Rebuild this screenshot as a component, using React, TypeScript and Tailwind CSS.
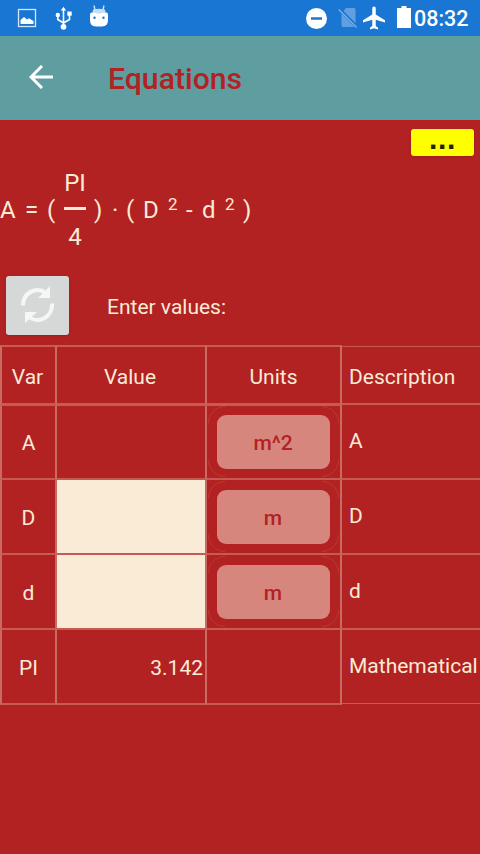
import React from "react";

const line = "border-x-[#cb6a63] border-y-[#c65a54]";

function Term({ w, children }: { w: string; children: React.ReactNode }) {
  return <span className={`${w} shrink-0 whitespace-nowrap pt-[2px]`}>{children}</span>;
}

function StatusBar() {
  return (
    <div className="flex h-9 items-center bg-[#1976d2] text-white">
      <svg className="ml-[17px] h-5 w-5" viewBox="0 0 20 20">
        <rect x="1.5" y="1.5" width="17" height="17" fill="none" stroke="#d5e6f8" strokeWidth="1.3" />
        <path d="M3.500 16v-4l3.500-3 3 2.500 2-1.300 2 1.300 2.500 1.500v3z" fill="white" />
      </svg>
      <svg className="ml-[18px] h-6 w-[18px]" viewBox="0 0 18 24" fill="none" stroke="white" strokeWidth="1.600">
        <path d="M8.500 3v18M2.800 9v4.500L8.500 17l6-3.500V8" />
        <path d="M8.500 .8 11.200 4.500H5.800z" fill="white" stroke="none" />
        <circle cx="2.800" cy="9" r="2.200" fill="white" stroke="none" />
        <rect x="12.300" y="5.500" width="4.400" height="4.200" fill="white" stroke="none" />
        <circle cx="8.500" cy="20.800" r="2.900" fill="white" stroke="none" />
      </svg>
      <svg className="-mt-[4px] ml-[17px] h-[22px] w-[18px]" viewBox="0 0 18 22">
        <path d="M4 .5l1 4.500M14 .5l-1 4.500" stroke="#d5e6f8" strokeWidth="1.300" />
        <path d="M3 4.500q6-1.500 12 0l.7 4H2.300z" fill="#c6ddf5" />
        <path d="M0 9.500q0-1.500 1.500-2 7.500 1.500 15 0 1.500.5 1.500 2V15q0 6.500-6 6.500H6Q0 21.500 0 15z" fill="white" />
        <circle cx="4.500" cy="12.800" r="1.200" fill="#1976d2" />
        <circle cx="13.500" cy="12.800" r="1.200" fill="#1976d2" />
      </svg>
      <svg className="ml-[198px] h-[21px] w-[21px]" viewBox="0 0 21 21">
        <circle cx="10.500" cy="10.500" r="10.500" fill="white" />
        <path d="M5 10.500h11" stroke="#1976d2" strokeWidth="2.500" />
      </svg>
      <svg className="ml-[11px] h-[22px] w-5" viewBox="0 0 20 22">
        <path d="M8 1h8q1.500 0 1.500 1.500V16L5.500 4zM3.500 6.500 16.500 20H5q-1.500 0-1.500-1.500z" fill="#619fdf" />
        <path d="M.7 2.500l18 18" stroke="#7bb0e5" strokeWidth="1.300" />
      </svg>
      <svg className="ml-[5px] h-6 w-[22px]" viewBox="2 1.500 19 21" preserveAspectRatio="none">
        <path d="M21 16v-2l-8-5V3.500a1.500 1.500 0 0 0-3 0V9l-8 5v2l8-2.500V19l-2 1.500V22l3.500-1 3.500 1v-1.500L13 19v-5.500z" fill="white" />
      </svg>
      <svg className="-mt-[2px] ml-[12px] h-[22px] w-[14px]" viewBox="0 0 14 22">
        <path d="M4.500 0h5v2H14v20H0V2h4.500z" fill="white" />
      </svg>
      <span className="ml-[3px] mt-[2px] text-[21.5px] font-medium leading-none">08:32</span>
    </div>
  );
}

const rows = [
  { name: "A", value: "", unit: "m^2", description: "A", input: false },
  { name: "D", value: "", unit: "m", description: "D", input: true },
  { name: "d", value: "", unit: "m", description: "d", input: true },
  { name: "PI", value: "3.142", unit: "", description: "Mathematical", input: false },
];

export default function App() {
  return (
    <div className="flex h-[854px] w-[480px] flex-col overflow-hidden bg-[#b22222] font-['Roboto',sans-serif] text-[#faebd7]">
      <StatusBar />
      <header className="flex h-[84px] items-center bg-[#5f9ea0]">
        <svg className="-mt-[2px] ml-[29px] h-6 w-6" viewBox="0 0 24 24" fill="none" stroke="white" strokeWidth="3">
          <path d="M24 12H2M13 1 2 12l11 11" />
        </svg>
        <h1 className="ml-[55px] mt-[2px] text-[30.2px] font-medium leading-none text-[#b22222]">Equations</h1>
      </header>

      <div className="flex h-[49px] justify-end pr-[6px] pt-[9px]">
        <button className="flex h-[27px] w-[63px] items-center justify-center rounded-[3px] bg-[#ffff00] shadow-sm">
          <span className="-mt-[9px] font-['Liberation_Sans',sans-serif] text-[30px] font-bold leading-[27px] tracking-[0.7px] text-[#222200]">...</span>
        </button>
      </div>

      <div className="flex h-[80px] items-center text-[24px] leading-none">
        <Term w="w-[25px]">A</Term>
        <Term w="w-[22px]">=</Term>
        <Term w="w-[17px]">(</Term>
        <span className="flex w-[22px] flex-col items-center pt-[2px]">
          <span className="h-[24px] whitespace-nowrap">PI</span>
          <span className="mb-[15px] mt-[12px] h-[3px] w-[22px] bg-[#faebd7]" />
          <span className="h-[24px]">4</span>
        </span>
        <span className="w-[8px]" />
        <Term w="w-[18px]">)</Term>
        <Term w="w-[14px]">·</Term>
        <Term w="w-[17px]">(</Term>
        <Term w="w-[25px]">D</Term>
        <span className="mb-[10px] w-[18px] text-[17px]">2</span>
        <Term w="w-[16px]">-</Term>
        <Term w="w-[23px]">d</Term>
        <span className="mb-[10px] w-[18px] text-[17px]">2</span>
        <Term w="w-[10px]">)</Term>
      </div>

      <div className="flex h-[96px] items-center pl-[6px] pt-[17px]">
        <button className="flex h-[59px] w-[63px] items-center justify-center rounded-[3px] bg-[#d6d8d7] shadow">
          <svg className="-mt-[2px] h-[37px] w-[34px]" viewBox="0 0 34 37" fill="none" stroke="#f6f6f6" strokeWidth="4">
            <path d="M2 19.500A14.500 15 0 0 1 25 7M31 17.500A14.500 15 0 0 1 8 31" />
            <path d="M29 0v12H17zM4 37V26H16z" fill="#f6f6f6" stroke="none" />
          </svg>
        </button>
        <span className="ml-[38px] mt-[3px] text-[21px] leading-none">Enter values:</span>
      </div>

      <div className="flex h-[360px] w-[480px] flex-col text-[21px] leading-none">
        <div className="flex h-[60px]">
          <div className={`flex w-[57px] items-center justify-center border-2 pr-[2px] pt-[5px] ${line}`}>Var</div>
          <div className={`flex w-[150px] items-center justify-center border-y-2 border-r-2 pr-[2px] pt-[5px] ${line}`}>Value</div>
          <div className={`flex w-[135px] items-center justify-center border-y-2 border-r-2 pt-[5px] ${line}`}>Units</div>
          <div className={`mt-px flex w-[138px] items-center border-b-2 border-t pl-[7px] pt-[4px] ${line}`}>Description</div>
        </div>
        {rows.map((r, i) => (
          <div key={r.name} className="flex h-[75px]">
            <div className={`flex w-[57px] items-center justify-center border-x-2 border-b-2 pt-[3px] ${i === 0 ? "border-t" : ""} ${line}`}>{r.name}</div>
            <div className={`flex w-[150px] items-center justify-end border-b-2 border-r-2 pr-[2px] pt-[3px] ${i === 0 ? "border-t" : ""} ${line} ${r.input ? "bg-[#faebd7]" : ""}`}>{r.value}</div>
            <div className={`relative flex w-[135px] items-center justify-center border-b-2 border-r-2 ${line}`}>
              {i === 0 && <span className="absolute inset-x-0 top-0 h-px bg-[#c65a54]" />}
              {r.unit && (
                <>
                  <svg className="absolute left-0 top-0 h-[73px] w-[133px]" viewBox="0 0 133 73" fill="none" stroke="#bf423e" strokeWidth="0.700">
                    <path d="M1.500 18A16.500 16.500 0 0 1 18 1.500M115 1.500A16.500 16.500 0 0 1 131.500 18M131.500 55A16.500 16.500 0 0 1 115 71.500M18 71.500A16.500 16.500 0 0 1 1.500 55" />
                  </svg>
                  <button className="relative h-[54px] w-[113px] rounded-[9px] bg-[#d7867e] pr-px pt-[4px] font-medium text-[#b22222]">{r.unit}</button>
                </>
              )}
            </div>
            <div className={`flex w-[138px] items-center pl-[7px] ${i === 3 ? "mb-px border-b" : "border-b-2"} ${line}`}>{r.description}</div>
          </div>
        ))}
      </div>
    </div>
  );
}
